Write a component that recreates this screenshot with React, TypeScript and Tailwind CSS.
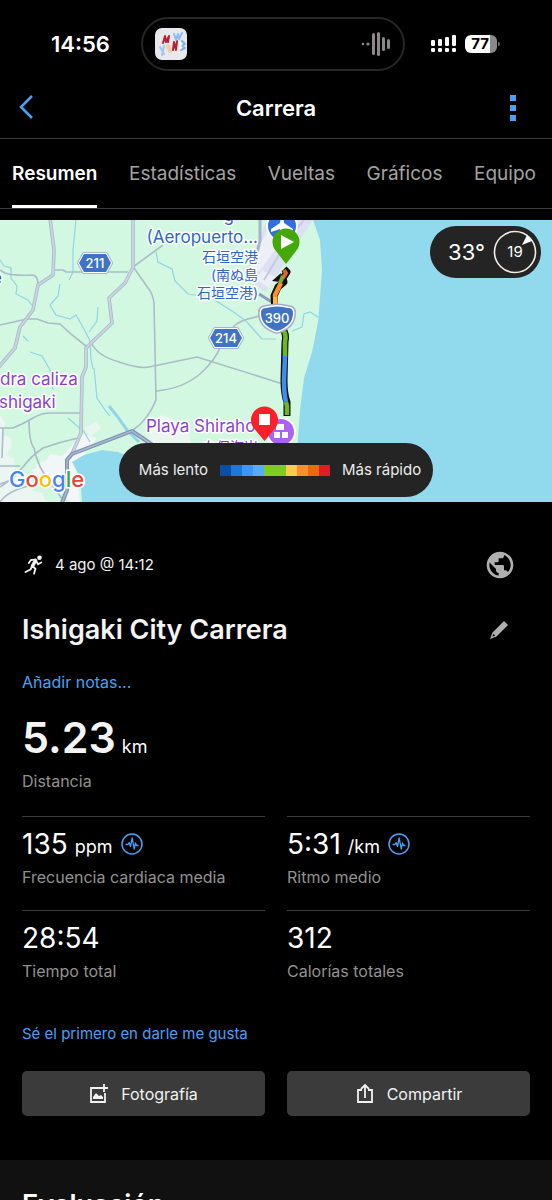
import type { ReactNode } from "react";
import { MdPublic } from "react-icons/md";
import clsx from "clsx";

const tabs = ["Resumen", "Estadísticas", "Vueltas", "Gráficos", "Equipo"];

const paceColors = [
    "bg-[#0a4fa6]",
    "bg-[#1f78d6]",
    "bg-[#3f96f5]",
    "bg-[#5aaafb]",
    "bg-[#7fcb22]",
    "bg-[#7fcb22]",
    "bg-[#fbcb4b]",
    "bg-[#fa8f2c]",
    "bg-[#ee680f]",
    "bg-[#db1f26]",
];

type Stat = {
    label: string;
    value: string;
    unit?: string;
};

const stats: Stat[] = [
    { label: "Frecuencia cardiaca media", value: "135", unit: "ppm" },
    { label: "Ritmo medio", value: "5:31", unit: "/km" },
    { label: "Tiempo total", value: "28:54" },
    { label: "Calorías totales", value: "312" },
];

function StatusBar() {
    return (
        <div className="grid grid-cols-[1fr_264px_1fr] items-center pt-[17px] pr-1.5">
            <span className="pl-5 text-center text-[22px] leading-7 font-semibold">14:56</span>
            <div className="flex h-[54px] items-center justify-between rounded-full border-2 border-[#262626] px-3">
                <svg viewBox="0 0 32 32" className="size-8" aria-hidden="true">
                    <rect width="32" height="32" rx="7" fill="#e9e8ea" />
                    <g fill="none" strokeLinecap="round" strokeLinejoin="round">
                        <path d="M8 15l2-7 1 6 3-6-1 6" stroke="#b8203a" strokeWidth="2" />
                        <path d="M18 22l1-8 2 8 1-9" stroke="#b8203a" strokeWidth="2" />
                        <path d="M19 6l2 6 2-6 1 5 3-6" stroke="#8abdf2" strokeWidth="2" />
                        <path d="M5 19l4 7M9 18l-2 9" stroke="#9cc8f5" strokeWidth="2" />
                        <path d="M27 13l3 3-3 2 3 2-4 2" stroke="#7fb2ec" strokeWidth="2" />
                        <path d="M13 18l2 5" stroke="#f6cda9" strokeWidth="4" />
                        <path d="M25 15v5" stroke="#fff" strokeWidth="3" />
                    </g>
                </svg>
                <svg viewBox="0 0 30 26" className="h-[26px] w-[30px]" fill="#8f868a" aria-hidden="true">
                    <circle cx="2" cy="13" r="1.3" />
                    <circle cx="7" cy="13" r="1.6" />
                    <rect x="11" y="2" width="3" height="22" rx="1.5" />
                    <rect x="16" y="1" width="3" height="24" rx="1.5" />
                    <rect x="21" y="6" width="3" height="14" rx="1.5" />
                    <rect x="26" y="8" width="3" height="10" rx="1.5" />
                </svg>
            </div>
            <div className="flex items-center gap-2 pl-[26px]">
                <svg viewBox="0 0 26 18" className="h-[18px] w-[26px]" fill="#fff" aria-hidden="true">
                    <rect x="0" y="5" width="4" height="6" rx="1.2" />
                    <rect x="7" y="4" width="4" height="7" rx="1.2" />
                    <rect x="14" y="2" width="4" height="9" rx="1.2" />
                    <rect x="21" y="0" width="4" height="11" rx="1.2" />
                    <rect x="0" y="13" width="4" height="4" rx="1.2" />
                    <rect x="7" y="13" width="4" height="4" rx="1.2" />
                    <rect x="14" y="13" width="4" height="4" rx="1.2" />
                    <rect x="21" y="13" width="4" height="4" rx="1.2" />
                </svg>
                <div className="flex items-center gap-px">
                    <span className="h-[18px] w-8 rounded-md bg-linear-to-r from-white from-78% to-[#8a8a8a] to-78% pr-0.5 text-center text-[15px] leading-[18px] font-bold text-black">
                        77
                    </span>
                    <span className="h-1 w-0.5 rounded-r-full bg-[#6b6b6b]" />
                </div>
            </div>
        </div>
    );
}

function Header() {
    return (
        <header className="grid h-[68px] grid-cols-3 items-center border-b border-[#3c3c3c] px-4 pt-1.5">
            <button type="button" aria-label="Atrás" className="justify-self-start">
                <svg viewBox="0 0 20 26" className="h-[26px] w-5" fill="none" stroke="#4aa0f5" strokeWidth="2.6">
                    <path d="M16 1L5 12l11 11" />
                </svg>
            </button>
            <h1 className="text-center text-[22px] leading-7 font-semibold">Carrera</h1>
            <button type="button" aria-label="Más opciones" className="justify-self-end pr-5">
                <svg viewBox="0 0 6 26" className="h-[26px] w-1.5" fill="#4aa0f5">
                    <path d="M0 0h6v6H0zM0 10h6v6H0zM0 20h6v6H0z" />
                </svg>
            </button>
        </header>
    );
}

function Tabs() {
    return (
        <nav className="flex h-[70px] justify-between border-b border-[#3c3c3c] pr-4 pl-3" aria-label="Secciones">
            {tabs.map((tab, i) => (
                <a
                    key={tab}
                    href="#"
                    aria-current={i === 0 ? "page" : undefined}
                    className={clsx(
                        "flex items-center border-b-3 pt-1 text-[19px] leading-6",
                        i === 0 ? "border-white font-semibold text-white" : "border-transparent text-[#a3a3a3]"
                    )}
                >
                    {tab}
                </a>
            ))}
        </nav>
    );
}

function RoadShield({ x, y, label }: { x: number; y: number; label: string }) {
    return (
        <g transform={`translate(${x} ${y})`} strokeLinejoin="round">
            <path d="M-11-9h22l5 9-5 9h-22l-5-9z" fill="#a9b4d0" stroke="#a9b4d0" strokeWidth="4" />
            <path d="M-11-9h22l5 9-5 9h-22l-5-9z" fill="#fff" stroke="#fff" strokeWidth="2" />
            <path d="M-11-9h22l5 9-5 9h-22l-5-9z" fill="#3f73c4" />
            <text y="5" textAnchor="middle" fontSize="13" fontWeight="500" fill="#fff">
                {label}
            </text>
        </g>
    );
}

function RouteMap() {
    return (
        <svg
            viewBox="0 0 552 282"
            preserveAspectRatio="xMidYMid slice"
            className="block w-full font-['Inter','Noto_Sans_CJK_JP',sans-serif]"
            role="img"
            aria-label="Mapa del recorrido"
        >
            <rect width="552" height="282" fill="#d2f8e1" />

            {/* built-up areas */}
            <g fill="#f3f6f8">
                <path d="M0 195l5 8-2 12 8 2 1 10-6 8 8 4 2 16 14 2 2 14 10 2 4 9H0z" opacity=".75" />
                <path d="M70 282l-8-12-22-8-8-12 14-8 4-8 12 2 8-8 8-10 6-4 12 4-2 6-10 6 2 8-10 6 4 40z" />
                <path d="M84 208l12-6 5 6-11 8zM150 205l12-10 24 10 6 20H150z" opacity=".7" />
                <path d="M35 245l20-8 6 20-12 6z" opacity=".8" />
            </g>

            {/* sea */}
            <path
                d="M313 0l7 20 2 30-2 28-2 24-6 30-8 26-4 32-3 42-127 18-18-4-34-14-16-2-18 5-12 7 8 15 2 25h470V0z"
                fill="#91daee"
            />

            {/* airport */}
            <path d="M267 0h46l-34 52-14 20-20-18z" fill="#dde0f0" />
            <path d="M267 10l18 6-26 36-9-5zM262 50l15 8-8 10-12-8z" fill="#eceef8" />
            <path d="M288 20l16-20M264 60l18-30" stroke="#c3cbe2" strokeWidth="2" />

            {/* rivers */}
            <g fill="none" stroke="#90d4e8" strokeWidth="1.2">
                <path d="M76 0l-3 30 0 22-4 8M60 64l-2 12-8 9 6 10 14 4 6-4 8 14 6 12 1 18 2 10" />
                <path d="M0 40l4 6 7 2 0 10 6 8-1 8 12 6 6 8M98 87l-1 14-8 11M23 116l5 5M30 132l12 4 8 14 3 20" />
                <path d="M94 148l3 30 8 12 5 6" />
                <path d="M109 186l8 10 10 14 12 12" strokeWidth="3" />
                <path d="M156 32l2 10 14 7 3 12 13 13 22 3 22 14 14 10 16 18 14 0" />
                <path d="M292 111l10-4 2-13 6-2 8 5M68 198l16 14 6 10" />
            </g>

            {/* minor roads */}
            <g fill="none" stroke="#aabcc6" strokeWidth="1.6">
                <path d="M0 50l5 3q8 3 28 2 5 1 5 10M54 50h9l3 2h62M163 25l-30 22M134 48l14 20q5 6 6 15l2 97q-8 20-23 30" />
                <path d="M0 105l27-6h10l11 4 12 1 12 11 14 11M92 124q6 12 27 18 20 7 30 5l48-10 86 27" />
                <path d="M156 171q26-2 44-17 16-14 21-29M233 107q6-7 27-11" />
                <path d="M0 208h13q10-4 20-10 8-5 18-5h29M29 200q0 22 5 28 4 20 16 34l13 18" />
                <path d="M78 218q-18 4-35 10-12 8-20 19-10 12-23 20M3 208l-1 30M0 246h20M0 264q14-4 16-10M0 282q10-14 40-18" />
            </g>

            {/* main roads */}
            <g fill="none" strokeLinejoin="round">
                <g stroke="#a9b8c9" strokeWidth="3.6">
                    <path d="M50-2l4 32-1 25-15 10-5 25-13 17-5 21-17 20" />
                    <path d="M133-2v49l-8 16-16 15 3 25-26 25v19l-4 10-1 56-9 21" />
                </g>
                <g stroke="#c9d4e0" strokeWidth="2">
                    <path d="M50-2l4 32-1 25-15 10-5 25-13 17-5 21-17 20" />
                    <path d="M133-2v49l-8 16-16 15 3 25-26 25v19l-4 10-1 56-9 21" />
                </g>
                <path d="M62 283l5-13v-30l5-6 60-23 22 15" stroke="#7c8fb0" strokeWidth="4" />
                <path d="M62 283l5-13v-30l5-6 60-23 22 15" stroke="#a9b8d2" strokeWidth="1.6" />
                <path d="M259 74l16 10" stroke="#8c9db5" strokeWidth="3" />
                <path d="M260 0v20l-4 18" stroke="#a8b3cc" strokeWidth="3" />
            </g>

            {/* airport and beach markers */}
            <circle cx="282" cy="6" r="15" fill="#2f6fe0" stroke="#fff" strokeWidth="2" />
            <path d="M281-4h2l1 7 9 6v3l-9-3v4h-4v-4l-9 3V9l9-6z" fill="#fff" />
            <circle cx="281" cy="212" r="14" fill="#ac63f2" stroke="#fff" strokeWidth="2" />
            <path d="M276 204h8v6h-8zM274 212h6v6h-6zM282 212h6v6h-6z" fill="#fff" />

            {/* track */}
            <g fill="none" strokeLinejoin="round">
                <path
                    d="M284 49l3 3-4 6 1 4-6 5-4 9 1 14M282 108q5 6 3 14l-1 38q0 14 3 22v14"
                    stroke="#111"
                    strokeWidth="7"
                />
                <path d="M272 61l9-8-1 9z" fill="#111" />
                <path d="M284 50l2 3-3 5" stroke="#e2622c" strokeWidth="4" />
                <path d="M283 56l-3 7" stroke="#8aa335" strokeWidth="4" />
                <path d="M281 63l-6 12 1 14" stroke="#fa8f2c" strokeWidth="4.500" />
                <path d="M275 77v12" stroke="#fbb84b" strokeWidth="4" />
                <path d="M282 108q5 6 3 14v15" stroke="#6cb822" strokeWidth="4.500" />
                <path d="M285 136l-1 24q0 14 2 22" stroke="#3f8cf0" strokeWidth="4.500" />
                <path d="M286 182l1 4v9" stroke="#6cb822" strokeWidth="4.500" />
            </g>

            <RoadShield x={95} y={43} label="211" />
            <RoadShield x={226} y={118} label="214" />
            <g transform="translate(277 98)" strokeLinejoin="round">
                <path
                    d="M-11-10q11-3 22 0 5 0 5 5 0 13-16 18-16-5-16-18 0-5 5-5z"
                    fill="#a9a9cf"
                    stroke="#a9a9cf"
                    strokeWidth="6"
                />
                <path
                    d="M-11-10q11-3 22 0 5 0 5 5 0 13-16 18-16-5-16-18 0-5 5-5z"
                    fill="#fff"
                    stroke="#fff"
                    strokeWidth="3"
                />
                <path d="M-11-10q11-3 22 0 5 0 5 5 0 13-16 18-16-5-16-18 0-5 5-5z" fill="#3f73c4" />
                <text y="5" textAnchor="middle" fontSize="13" fontWeight="500" fill="#fff">
                    390
                </text>
            </g>

            {/* place names */}
            <g stroke="#fff" strokeWidth="3" strokeLinejoin="round" paintOrder="stroke">
                <g fill="#2f66c9">
                    <g textAnchor="end" fontSize="17">
                        <text x="234" y="1">g</text>
                        <text x="258" y="23">(Aeropuerto...</text>
                    </g>
                    <g textAnchor="end" fontSize="14">
                        <text x="258" y="42">石垣空港</text>
                        <text x="258" y="60">(南ぬ島</text>
                        <text x="258" y="78">石垣空港)</text>
                    </g>
                </g>
                <g fill="#8b3fd1">
                    <g fontSize="17">
                        <text x="0" y="165">dra caliza</text>
                        <text x="-1" y="188">shigaki</text>
                        <text x="146" y="212">Playa Shiraho</text>
                    </g>
                    <text x="258" y="232" fontSize="14" textAnchor="end">白保海岸</text>
                </g>
                <text x="-8" y="64" fontSize="17" fill="#1c5a52">e</text>
            </g>

            {/* start and finish pins */}
            <path d="M286 44l-10-13a13.500 13.500 0 1 1 20 0z" fill="#44a808" />
            <path d="M281 15l13 7-13 7z" fill="#fff" />
            <path d="M264.500 221l-10-12a13.500 13.500 0 1 1 20 0z" fill="#fb1f2c" />
            <path d="M259 194h11v11h-11z" fill="#fff" />

            <text
                x="9"
                y="267"
                fontSize="22"
                fontWeight="500"
                stroke="#fff"
                strokeWidth="3"
                paintOrder="stroke"
            >
                <tspan fill="#4285f4">G</tspan>
                <tspan fill="#ea4335">o</tspan>
                <tspan fill="#fbbc05">o</tspan>
                <tspan fill="#4285f4">g</tspan>
                <tspan fill="#34a853">l</tspan>
                <tspan fill="#ea4335">e</tspan>
            </text>
        </svg>
    );
}

function MapPanel() {
    return (
        <section className="relative mt-[11px]" aria-label="Mapa">
            <RouteMap />
            <div className="absolute top-1.5 right-[11px] flex h-13 items-center gap-2 rounded-full bg-[#242424] pr-1 pl-[18px]">
                <span className="text-[22px] leading-7">33°</span>
                <div className="relative flex size-11 items-center justify-center text-[15px]">
                    <svg viewBox="0 0 44 44" className="absolute inset-0 size-full" aria-hidden="true">
                        <circle cx="22" cy="22" r="20.500" fill="none" stroke="#f1ece4" strokeWidth="1.6" />
                        <path d="M29 15l5-10 5 6z" fill="#fff" />
                    </svg>
                    19
                </div>
            </div>
            <div className="absolute bottom-[5px] left-1/2 flex h-[54px] w-[314px] -translate-x-1/2 items-center justify-center gap-3 rounded-full bg-[#242424] pl-2 text-[15px] whitespace-nowrap text-[#ececec]">
                <span>Más lento</span>
                <div className="flex h-[11px] w-[110px]">
                    {paceColors.map((color, i) => (
                        <span key={i} className={clsx("flex-1", color)} />
                    ))}
                </div>
                <span>Más rápido</span>
            </div>
        </section>
    );
}

function RunnerIcon() {
    return (
        <svg
            viewBox="0 0 20 20"
            className="size-5"
            fill="none"
            stroke="currentColor"
            strokeWidth="1.8"
            strokeLinecap="round"
            strokeLinejoin="round"
            aria-hidden="true"
        >
            <circle cx="15.500" cy="2.700" r="2.300" fill="currentColor" stroke="none" />
            <path d="M11.500 5.500L8.500 11" strokeWidth="3.600" />
            <path d="M11 4.600L7 5 4.800 8M12.500 6.500l1.500 2.700 3.300-1.700" />
            <path d="M8 11.500l-1.500 3L1.500 17M8.800 11.500l2.700 2.300L10 18.700" />
        </svg>
    );
}

function PulseIcon() {
    return (
        <svg viewBox="0 0 22 22" className="size-[22px]" fill="none" stroke="#4aa0f5" aria-hidden="true">
            <circle cx="11" cy="11" r="10" strokeWidth="1.5" />
            <path d="M4.500 11.500H7l1.200-2 1.300 4 1.700-8.500 2 11 1.300-6 1 2.500h2" strokeWidth="1.3" strokeLinejoin="round" />
        </svg>
    );
}

function StatCell({ label, value, unit }: Stat) {
    return (
        <div className="flex h-[94px] flex-col border-t border-[#3c3c3c] pt-1.5">
            <dt className="order-last text-base leading-6 text-[#929292]">{label}</dt>
            <dd className="flex h-[42px] items-center">
                <span className="text-[28px] leading-9">{value}</span>
                {unit && (
                    <>
                        <span className="pt-1.5 pr-2 pl-[7px] text-[18px] leading-6">{unit}</span>
                        <PulseIcon />
                    </>
                )}
            </dd>
        </div>
    );
}

function ActionButton({ icon, children }: { icon: ReactNode; children: ReactNode }) {
    return (
        <button
            type="button"
            className="flex h-[45px] items-center justify-center gap-3 rounded-[5px] bg-[#3b3b3b] text-base text-[#f2f2f2]"
        >
            {icon}
            {children}
        </button>
    );
}

function ActivitySummary() {
    return (
        <section className="px-[22px] pt-[49px] pb-11">
            <div className="flex h-7 items-center justify-between pr-3.5 pl-0.5">
                <p className="flex items-center gap-[11px] text-[15px] leading-5 text-[#f2f2f2]">
                    <RunnerIcon />
                    4 ago @ 14:12
                </p>
                <MdPublic className="size-8 text-[#b0b0b0]" />
            </div>

            <div className="mt-[31px] flex h-10 items-center justify-between pr-[22px]">
                <h2 className="text-[27px] leading-9 font-semibold text-[#f4f4f4]">Ishigaki City Carrera</h2>
                <button type="button" aria-label="Editar título">
                    <svg viewBox="0 0 18 18" className="size-[18px]" fill="#b0b0b0" fillRule="evenodd">
                        <path d="M14 0l4 4L6.500 15.500 0 18l2.500-6.500zM3.600 12.800l-1.400 3 3-1.400z" />
                    </svg>
                </button>
            </div>

            <a href="#" className="mt-5 block w-fit text-base leading-6 text-[#4aa0f5]">
                Añadir notas...
            </a>

            <p className="mt-4 flex items-baseline gap-1.5">
                <span className="text-[43px] leading-[54px] font-semibold text-[#f4f4f4]">5.23</span>
                <span className="text-[18px] leading-6">km</span>
            </p>
            <p className="mt-[5px] text-base leading-6 text-[#929292]">Distancia</p>

            <dl className="mt-[23px] grid grid-cols-2 gap-x-[22px]">
                {stats.map((stat) => (
                    <StatCell key={stat.label} {...stat} />
                ))}
            </dl>

            <a href="#" className="mt-[18px] block w-fit text-[15px] leading-6 text-[#4aa0f5]">
                Sé el primero en darle me gusta
            </a>

            <div className="mt-[25px] grid grid-cols-2 gap-[22px]">
                <ActionButton
                    icon={
                        <svg viewBox="0 0 20 20" className="size-5" fill="none" stroke="currentColor" strokeWidth="1.8" aria-hidden="true">
                            <path d="M11 4H2v14h14V9M15 0v8M11 4h8" />
                            <path d="M4 15v-2l3-4 3 3 2-1 2 2v2z" fill="currentColor" stroke="none" />
                        </svg>
                    }
                >
                    Fotografía
                </ActionButton>
                <ActionButton
                    icon={
                        <svg viewBox="0 0 20 20" className="size-5" fill="none" stroke="currentColor" strokeWidth="1.8" aria-hidden="true">
                            <path d="M7 6H3v12h14V6h-4M10 14V2M6 5l4-4 4 4" />
                        </svg>
                    }
                >
                    Compartir
                </ActionButton>
            </div>
        </section>
    );
}

export default function App() {
    return (
        <main className="h-screen overflow-y-auto bg-black font-['Inter',sans-serif] text-white [scrollbar-width:none]">
            <StatusBar />
            <Header />
            <Tabs />
            <MapPanel />
            <ActivitySummary />
            <section className="bg-[#111111] px-[22px] pt-[27px] pb-10">
                <h2 className="text-[27px] leading-9 font-semibold">Evaluación</h2>
            </section>
        </main>
    );
}
